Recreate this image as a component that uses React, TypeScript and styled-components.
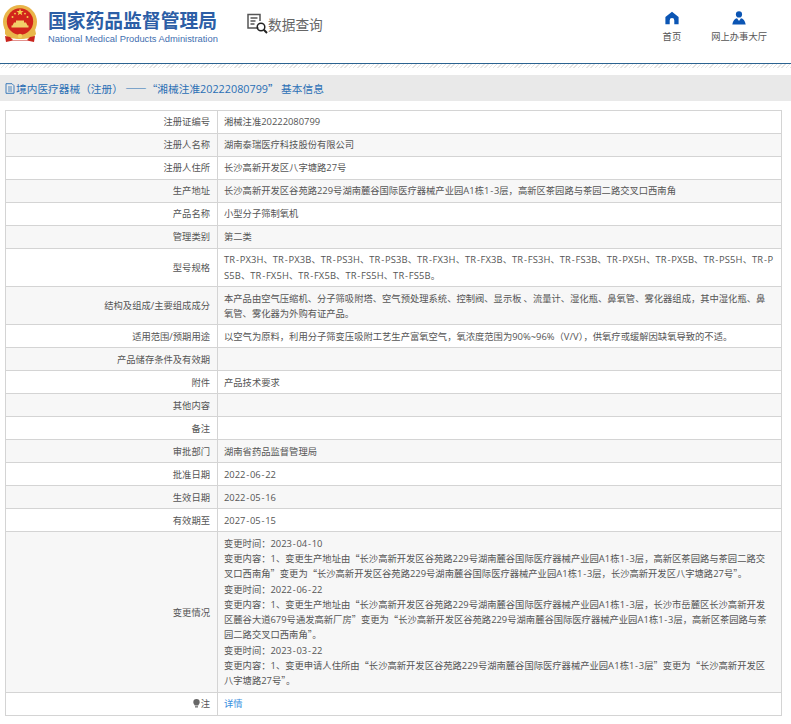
import React from "react";
import styled, { createGlobalStyle } from "styled-components";

const Global = createGlobalStyle`
  html, body { margin: 0; padding: 0; background: #fff; }
  body { font-family: "Noto Sans CJK SC", sans-serif; color: #555; }
`;

const Page = styled.div`
  width: 791px;
  height: 724px;
  overflow: hidden;
`;
const Header = styled.header`
  display: flex;
  align-items: flex-start;
  height: 63px;
  border-bottom: 1px solid #2b6391;
`;
const Emblem = styled.svg`
  width: 36px;
  height: 38px;
  margin: 5px 0 0 2px;
  flex: none;
`;
const Brand = styled.div`
  margin: 7px 0 0 10px;
  width: 172px;
  flex: none;
`;
const BrandName = styled.div`
  font-size: 18.8px;
  line-height: 25px;
  font-weight: 700;
  color: #2c5ea6;
  white-space: nowrap;
`;
const BrandEn = styled.div`
  font-family: "Liberation Sans", sans-serif;
  font-size: 9.35px;
  line-height: 12px;
  margin-top: 1px;
  color: #3f6fb0;
  white-space: nowrap;
`;
const QueryTitle = styled.div`
  display: flex;
  align-items: center;
  margin: 13px 0 0 26px;
  font-size: 13.7px;
  line-height: 22px;
  color: #666;
  flex: none;
`;
const QueryIcon = styled.svg`
  width: 22px;
  height: 22px;
  flex: none;
`;
const Nav = styled.nav`
  display: flex;
  margin-left: auto;
  margin-right: 24px;
  margin-top: 11px;
  gap: 30px;
`;
const NavItem = styled.a`
  display: flex;
  flex-direction: column;
  align-items: center;
  gap: 5px;
  font-size: 9.3px;
  line-height: 13px;
  color: #555;
`;
const NavIcon = styled.svg`
  width: 14px;
  height: 14px;
`;
const Strip = styled.div`
  height: 4px;
  background: repeating-linear-gradient(135deg, #e4e4e4 0 1px, #fff 1px 3px);
`;
const Crumb = styled.div`
  display: flex;
  align-items: center;
  height: 26px;
  margin-top: 7px;
  padding-left: 5px;
  background: #e9e9e9;
  color: #2a6fb5;
  font-size: 10.7px;
  white-space: pre;
`;
const CrumbText = styled.span``;
const CrumbIcon = styled.svg`
  width: 10px;
  height: 11px;
  margin-right: 1px;
  flex: none;
`;
const Table = styled.table`
  width: 777px;
  margin: 9px 0 0 5px;
  border-collapse: collapse;
  table-layout: fixed;
  font-size: 9.3px;
  line-height: 15.3px;
`;
const Row = styled.tr<{ $shade: boolean }>`
  background: ${(p) => (p.$shade ? "#f7f7f7" : "#fff")};
`;
const Label = styled.th`
  width: 212px;
  box-sizing: border-box;
  padding: 3.35px 7px 3.35px 0;
  border: 1px solid #d4d4d4;
  text-align: right;
  font-weight: 400;
`;
const Value = styled.td`
  padding: 3.35px 7.3px 3.35px 6px;
  border: 1px solid #d4d4d4;
  word-break: break-all;
`;
const Latin = styled.span<{ $caps: boolean }>`
  font-family: "Open Sans", sans-serif;
  font-size: 1.01em;
  letter-spacing: ${(p) => (p.$caps ? "0.12px" : "0")};
`;
const Hyphen = styled.span`
  font-family: "Open Sans", sans-serif;
  padding: 0 0.08em;
`;
const Link = styled.a`
  color: #3b8fe0;
`;
const NoteIcon = styled.svg`
  width: 7px;
  height: 9px;
  margin-right: 1px;
  vertical-align: -1px;
`;

function Mixed({ text }: { text: string }) {
  return (
    <>
      {text.split(/([A-Za-z0-9%~/.]+|-)/).map((part, i) =>
        i % 2 === 0 ? (
          part
        ) : part === "-" ? (
          <Hyphen key={i}>-</Hyphen>
        ) : (
          <Latin key={i} $caps={/[A-Z]/.test(part)}>
            {part}
          </Latin>
        )
      )}
    </>
  );
}

const rows: [string, string[]][] = [
  ["注册证编号", ["湘械注准20222080799"]],
  ["注册人名称", ["湖南泰瑞医疗科技股份有限公司"]],
  ["注册人住所", ["长沙高新开发区八字塘路27号"]],
  ["生产地址", ["长沙高新开发区谷苑路229号湖南麓谷国际医疗器械产业园A1栋1-3层，高新区茶园路与茶园二路交叉口西南角"]],
  ["产品名称", ["小型分子筛制氧机"]],
  ["管理类别", ["第二类"]],
  ["型号规格", ["TR-PX3H、TR-PX3B、TR-PS3H、TR-PS3B、TR-FX3H、TR-FX3B、TR-FS3H、TR-FS3B、TR-PX5H、TR-PX5B、TR-PS5H、TR-PS5B、TR-FX5H、TR-FX5B、TR-FS5H、TR-FS5B。"]],
  ["结构及组成/主要组成成分", ["本产品由空气压缩机、分子筛吸附塔、空气预处理系统、控制阀、显示板 、流量计、湿化瓶、鼻氧管、雾化器组成，其中湿化瓶、鼻氧管、雾化器为外购有证产品。"]],
  ["适用范围/预期用途", ["以空气为原料，利用分子筛变压吸附工艺生产富氧空气，氧浓度范围为90%~96%（V/V），供氧疗或缓解因缺氧导致的不适。"]],
  ["产品储存条件及有效期", []],
  ["附件", ["产品技术要求"]],
  ["其他内容", []],
  ["备注", []],
  ["审批部门", ["湖南省药品监督管理局"]],
  ["批准日期", ["2022-06-22"]],
  ["生效日期", ["2022-05-16"]],
  ["有效期至", ["2027-05-15"]],
  [
    "变更情况",
    [
      "变更时间：2023-04-10",
      "变更内容：1、变更生产地址由“长沙高新开发区谷苑路229号湖南麓谷国际医疗器械产业园A1栋1-3层，高新区茶园路与茶园二路交叉口西南角”变更为“长沙高新开发区谷苑路229号湖南麓谷国际医疗器械产业园A1栋1-3层，长沙高新开发区八字塘路27号”。",
      "变更时间：2022-06-22",
      "变更内容：1、变更生产地址由“长沙高新开发区谷苑路229号湖南麓谷国际医疗器械产业园A1栋1-3层，长沙市岳麓区长沙高新开发区麓谷大道679号通发高新厂房”变更为“长沙高新开发区谷苑路229号湖南麓谷国际医疗器械产业园A1栋1-3层，高新区茶园路与茶园二路交叉口西南角”。",
      "变更时间：2023-03-22",
      "变更内容：1、变更申请人住所由“长沙高新开发区谷苑路229号湖南麓谷国际医疗器械产业园A1栋1-3层”变更为“长沙高新开发区八字塘路27号”。",
    ],
  ],
];

export default function App() {
  return (
    <Page lang="zh-CN">
      <Global />
      <Header>
        <Emblem viewBox="0 0 36 38">
          <circle cx="18" cy="17" r="17" fill="#e9b54a" />
          <circle cx="18" cy="16.5" r="13.2" fill="#d2241c" />
          <path d="M18 3.5l1 2.6h2.6l-2.1 1.6.8 2.6-2.3-1.6-2.2 1.6.8-2.6-2.1-1.6h2.6z" fill="#f4d04e" />
          <circle cx="10.5" cy="12" r="1" fill="#f4d04e" />
          <circle cx="25.5" cy="12" r="1" fill="#f4d04e" />
          <circle cx="13" cy="8.6" r=".9" fill="#f4d04e" />
          <circle cx="23" cy="8.6" r=".9" fill="#f4d04e" />
          <path d="M9.5 20.5h17v2h-17zM12 17.5h12l1.5 3h-15zM14 15.5h8v2h-8z" fill="#f2cf6a" />
          <path d="M3 24c3 5 8 7 15 7s12-2 15-7l1 5-3 4-13 1-12-1-3-4z" fill="#e8b84a" />
          <path d="M3 31l5 1 3 3 14 0 3-3 5-1-1 6-7-1.4H11L4 37z" fill="#c9241d" />
          <circle cx="18" cy="31" r="2.2" fill="#f3cf5c" />
        </Emblem>
        <Brand>
          <BrandName>国家药品监督管理局</BrandName>
          <BrandEn>National Medical Products Administration</BrandEn>
        </Brand>
        <QueryTitle>
          <QueryIcon viewBox="0 0 22 22" fill="none">
            <path d="M12.5 15H2V1.5h12V8" stroke="#555" strokeWidth="1.5" />
            <path d="M4.5 5h7M4.5 8h5M4.5 11h4" stroke="#555" strokeWidth="1.4" />
            <circle cx="15" cy="14" r="3.8" stroke="#222" strokeWidth="1.5" />
            <path d="M17.8 16.8L21 20" stroke="#222" strokeWidth="2" />
          </QueryIcon>
          数据查询
        </QueryTitle>
        <Nav>
          <NavItem>
            <NavIcon viewBox="0 0 14 14">
              <path d="M7 .8L13.6 6v7.2H9.3V9.4a2.3 2.3 0 0 0-4.6 0v3.8H.4V6z" fill="#0b55b4" />
            </NavIcon>
            首页
          </NavItem>
          <NavItem>
            <NavIcon viewBox="0 0 14 14">
              <circle cx="7" cy="3.4" r="3.1" fill="#0b55b4" />
              <path d="M.3 13.6C.8 9.6 3 7.4 5 7.2L7 10l2-2.8c2 .2 4.2 2.4 4.7 6.4z" fill="#0b55b4" />
            </NavIcon>
            网上办事大厅
          </NavItem>
        </Nav>
      </Header>
      <Strip />
      <Crumb>
        <CrumbIcon viewBox="0 0 10 11" fill="none">
          <path d="M1 .7h6l2 2v7.6H1z" stroke="#2a6fb5" strokeWidth=".9" />
          <path d="M3 4h4M3 6h4M3 8h4" stroke="#2a6fb5" strokeWidth=".8" />
        </CrumbIcon>
        <CrumbText>
          <Mixed text="境内医疗器械（注册） ——“湘械注准20222080799” 基本信息" />
        </CrumbText>
      </Crumb>
      <Table>
        <tbody>
          {rows.map(([label, lines], i) => (
            <Row key={i} $shade={i % 2 === 1}>
              <Label>
                <Mixed text={label} />
              </Label>
              <Value>
                {lines.map((line, j) => (
                  <React.Fragment key={j}>
                    {j > 0 && <br />}
                    <Mixed text={line} />
                  </React.Fragment>
                ))}
                {lines.length === 0 && "\u00a0"}
              </Value>
            </Row>
          ))}
          <Row $shade={false}>
            <Label>
              <NoteIcon viewBox="0 0 7 9">
                <path d="M3.5 0a3.2 3.2 0 0 1 3.2 3.2c0 1.4-1 2-1.5 3.2H1.8C1.3 5.2.3 4.6.3 3.2A3.2 3.2 0 0 1 3.5 0z" fill="#666" />
                <rect x="2" y="7" width="3" height="1.6" fill="#888" />
              </NoteIcon>
              注
            </Label>
            <Value>
              <Link>详情</Link>
            </Value>
          </Row>
        </tbody>
      </Table>
    </Page>
  );
}
